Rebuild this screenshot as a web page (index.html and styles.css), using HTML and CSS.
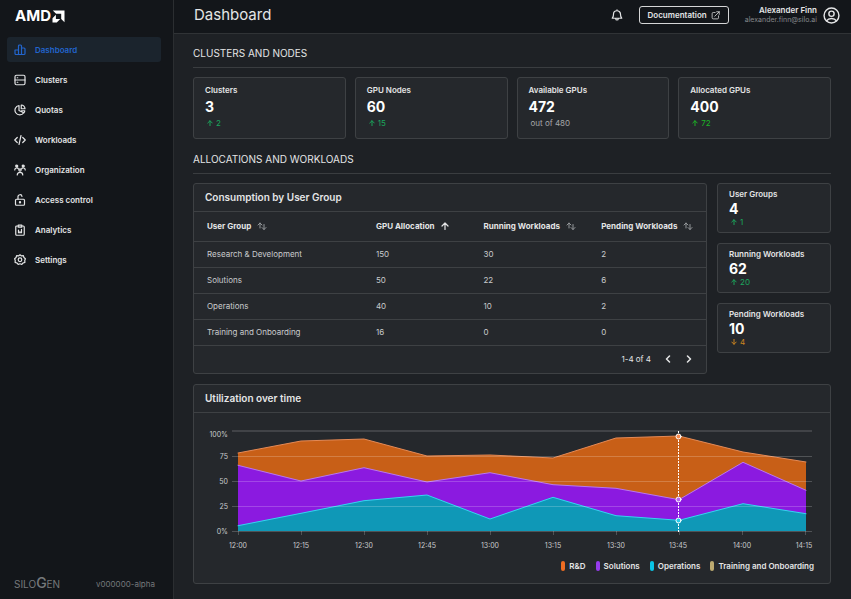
FILE: index.html
```html
<!DOCTYPE html>
<html lang="en">
<head>
<meta charset="utf-8">
<meta name="viewport" content="width=device-width, initial-scale=1">
<title>Dashboard</title>
<link rel="stylesheet" href="styles.css">
</head>
<body>
<div class="app">
  <aside class="sidebar">
    <a class="brand" href="#" aria-label="AMD home">
      <span>AMD</span>
      <svg class="brand-mark" viewBox="0 0 13 13" aria-hidden="true"><path d="M.8.5h11.7v11.7L9.2 8.9V3.8H4.100z"/><path d="M3.900 4.800v4.300h4.300l-3.400 3.400H.5V8.200z"/></svg>
    </a>
    <nav class="nav" aria-label="Main">
      <a class="nav-item active" href="#"><svg class="icon" viewBox="0 0 24 24" aria-hidden="true"><path d="M2 12h7v9H4a2 2 0 0 1-2-2zM9 4a2 2 0 0 1 2-2h2a2 2 0 0 1 2 2v17H9zM15 8h5a2 2 0 0 1 2 2v9a2 2 0 0 1-2 2h-5z"/></svg>Dashboard</a>
      <a class="nav-item" href="#"><svg class="icon" viewBox="0 0 24 24" aria-hidden="true"><rect x="2" y="2.500" width="20" height="19" rx="3"/><path d="M2 12h20M6.500 7.500h1M6.500 16.500h1"/></svg>Clusters</a>
      <a class="nav-item" href="#"><svg class="icon" viewBox="0 0 24 24" aria-hidden="true"><path d="M10 3a9.500 9.500 0 1 0 9.500 14.500L10 13zM14.500 2v7.500H22A7.500 7.500 0 0 0 14.500 2zM15 13.500h6.500c0 1.500-.7 3-1.500 4"/></svg>Quotas</a>
      <a class="nav-item" href="#"><svg class="icon" viewBox="0 0 24 24" aria-hidden="true"><path d="M6.500 7l-5 5 5 5M17.500 7l5 5-5 5M14 3l-4 18"/></svg>Workloads</a>
      <a class="nav-item" href="#"><svg class="icon" viewBox="0 0 24 24" aria-hidden="true"><circle class="solid" cx="5.500" cy="4" r="2"/><circle class="solid" cx="18.500" cy="4" r="2"/><circle cx="12" cy="12" r="2.200"/><path d="M1.500 12c0-5 6-5 7.500-2M22.500 12c0-5-6-5-7.500-2M6.500 22c0-7 11-7 11 0"/></svg>Organization</a>
      <a class="nav-item" href="#"><svg class="icon" viewBox="0 0 24 24" aria-hidden="true"><rect x="3" y="10.500" width="18" height="12" rx="2"/><path d="M8 10.500V6a4 4 0 0 1 8-1"/><circle class="solid" cx="12" cy="16.500" r="1.200"/></svg>Access control</a>
      <a class="nav-item" href="#"><svg class="icon" viewBox="0 0 24 24" aria-hidden="true"><rect x="3.500" y="4" width="17" height="18.500" rx="2"/><path d="M8.500 2h7v4.500h-7zM9 12v5.500h6v-7M12 15v2.500"/></svg>Analytics</a>
      <a class="nav-item" href="#"><svg class="icon" viewBox="0 0 24 24" aria-hidden="true"><path d="M12 1.500l3 2.300 3.800-.4 1.100 3.700 2.900 2.400-1.300 3.500.3 3.800-3.700 1.200-2.500 2.900-3.600-1.300-3.600 1.300-2.500-2.900-3.700-1.200.3-3.800-1.300-3.500 2.900-2.400 1.100-3.700 3.800.4z"/><circle cx="12" cy="11.500" r="3.600"/></svg>Settings</a>
    </nav>
    <footer class="side-footer">
      <span class="silogen">SILO<b>G</b>EN</span>
      <span class="version">v000000-alpha</span>
    </footer>
  </aside>

  <div class="page">
    <header class="topbar">
      <h1>Dashboard</h1>
      <button class="bell" type="button" aria-label="Notifications"><svg class="icon" viewBox="0 0 24 24" aria-hidden="true"><path d="M2.500 18.500h19c-2-2-2.500-3.500-2.500-8a7 7 0 0 0-14 0c0 4.500-.5 6-2.500 8zM12 3.500V1.500M9.500 19.500a2.500 2.500 0 0 0 5 0"/></svg></button>
      <button class="doc-button" type="button">Documentation<svg viewBox="0 0 24 24" aria-hidden="true"><path d="M11 4H6a3 3 0 0 0-3 3v11a3 3 0 0 0 3 3h11a3 3 0 0 0 3-3v-5M15 2h7v7M22 2L10 14"/></svg></button>
      <div class="user">
        <span class="user-name">Alexander Finn</span>
        <span class="user-mail">alexander.finn@silo.ai</span>
      </div>
      <button class="avatar" type="button" aria-label="Account"><svg viewBox="0 0 24 24" aria-hidden="true"><circle cx="12" cy="12" r="10.500"/><circle cx="12" cy="9.500" r="3.700"/><path d="M5 19.500c3-4.500 11-4.500 14 0"/></svg></button>
    </header>

    <main class="content">
      <h2 class="section-title">CLUSTERS AND NODES</h2>
      <div class="stats">
        <article class="card stat"><h3>Clusters</h3><strong>3</strong><p class="delta up"><svg viewBox="0 0 8 8" aria-hidden="true"><path d="M4 7.500V1M1 4l3-3 3 3"/></svg>2</p></article>
        <article class="card stat"><h3>GPU Nodes</h3><strong>60</strong><p class="delta up"><svg viewBox="0 0 8 8" aria-hidden="true"><path d="M4 7.500V1M1 4l3-3 3 3"/></svg>15</p></article>
        <article class="card stat"><h3>Available GPUs</h3><strong>472</strong><p class="delta">out of 480</p></article>
        <article class="card stat"><h3>Allocated GPUs</h3><strong>400</strong><p class="delta bright"><svg viewBox="0 0 8 8" aria-hidden="true"><path d="M4 7.500V1M1 4l3-3 3 3"/></svg>72</p></article>
      </div>

      <h2 class="section-title">ALLOCATIONS AND WORKLOADS</h2>
      <div class="allocations">
        <section class="card">
          <h3 class="card-title">Consumption by User Group</h3>
          <table>
            <thead>
              <tr>
                <th class="col-group" scope="col"><button type="button">User Group<svg class="sort" viewBox="0 0 10 8" aria-hidden="true"><path d="M3 6V1M1 3l2-2 2 2M7 2.500v5M5 5.500l2 2 2-2"/></svg></button></th>
                <th class="col-gpu" scope="col" aria-sort="ascending"><button type="button">GPU Allocation<svg class="sorted" viewBox="0 0 8 8" aria-hidden="true"><path d="M4 7.500V1M1 4l3-3 3 3"/></svg></button></th>
                <th class="col-load" scope="col"><button type="button">Running Workloads<svg class="sort" viewBox="0 0 10 8" aria-hidden="true"><path d="M3 6V1M1 3l2-2 2 2M7 2.500v5M5 5.500l2 2 2-2"/></svg></button></th>
                <th class="col-load" scope="col"><button type="button">Pending Workloads<svg class="sort" viewBox="0 0 10 8" aria-hidden="true"><path d="M3 6V1M1 3l2-2 2 2M7 2.500v5M5 5.500l2 2 2-2"/></svg></button></th>
              </tr>
            </thead>
            <tbody>
              <tr><td>Research &amp; Development</td><td>150</td><td>30</td><td>2</td></tr>
              <tr><td>Solutions</td><td>50</td><td>22</td><td>6</td></tr>
              <tr><td>Operations</td><td>40</td><td>10</td><td>2</td></tr>
              <tr><td>Training and Onboarding</td><td>16</td><td>0</td><td>0</td></tr>
            </tbody>
          </table>
          <div class="pager">
            <span>1-4 of 4</span>
            <button type="button" aria-label="Previous page"><svg viewBox="0 0 8 8" aria-hidden="true"><path d="M5.500 1l-3 3 3 3"/></svg></button>
            <button type="button" aria-label="Next page"><svg viewBox="0 0 8 8" aria-hidden="true"><path d="M2.500 1l3 3-3 3"/></svg></button>
          </div>
        </section>
        <div class="side-stats">
          <article class="card stat compact"><h3>User Groups</h3><strong>4</strong><p class="delta up"><svg viewBox="0 0 8 8" aria-hidden="true"><path d="M4 7.500V1M1 4l3-3 3 3"/></svg>1</p></article>
          <article class="card stat compact"><h3>Running Workloads</h3><strong>62</strong><p class="delta up"><svg viewBox="0 0 8 8" aria-hidden="true"><path d="M4 7.500V1M1 4l3-3 3 3"/></svg>20</p></article>
          <article class="card stat compact"><h3>Pending Workloads</h3><strong>10</strong><p class="delta down"><svg viewBox="0 0 8 8" aria-hidden="true"><path d="M4 .5V7M1 4l3 3 3-3"/></svg>4</p></article>
        </div>
      </div>

      <section class="card">
        <h3 class="card-title">Utilization over time</h3>
        <div class="chart-body">
          <svg class="chart" viewBox="0 0 612 128" role="img" aria-label="Utilization by group, 12:00 to 14:15">
            <path class="grid top" d="M26 6h580"/>
            <path class="area-rd" d="M32 28L95 16 158 14 221 31 284 30 347 33 410 13 473 11 537 27 600 37V106H32z"/>
            <path class="area-solutions" d="M32 40.300L95 56 158 42.700 221 57 284 47.700 347 59.700 410 63.300 473 74.700 537 37.300 600 65.300V106H32z"/>
            <path class="area-operations" d="M32 100.700L95 88.300 158 75.700 221 70 284 94 347 72.300 410 90.700 473 95.300 537 78.700 600 88.700V106H32z"/>
            <path class="line-rd" d="M32 28L95 16 158 14 221 31 284 30 347 33 410 13 473 11 537 27 600 37"/>
            <path class="line-solutions" d="M32 40.300L95 56 158 42.700 221 57 284 47.700 347 59.700 410 63.300 473 74.700 537 37.300 600 65.300"/>
            <path class="line-operations" d="M32 100.700L95 88.300 158 75.700 221 70 284 94 347 72.300 410 90.700 473 95.300 537 78.700 600 88.700"/>
            <path class="grid" d="M26 31.500h580M26 56.500h580M26 81.500h580M26 106.500h580"/>
            <path class="grid" d="M32.500 106v4M95.500 106v4M158.500 106v4M221.500 106v4M284.500 106v4M347.500 106v4M410.500 106v4M473.500 106v4M536.500 106v4M599.500 106v4"/>
            <path class="cursor" d="M472.500 6v101"/>
            <circle class="point point-rd" cx="472.500" cy="11.500" r="2.500"/>
            <circle class="point point-solutions" cx="472.500" cy="74.500" r="2.500"/>
            <circle class="point point-operations" cx="472.500" cy="95.500" r="2.500"/>
            <g class="ylabels"><text x="22" y="12">100%</text><text x="22" y="34">75</text><text x="22" y="59">50</text><text x="22" y="84">25</text><text x="22" y="109">0%</text></g>
            <g class="xlabels"><text x="32" y="123">12:00</text><text x="95" y="123">12:15</text><text x="158" y="123">12:30</text><text x="221" y="123">12:45</text><text x="284" y="123">13:00</text><text x="347" y="123">13:15</text><text x="410" y="123">13:30</text><text x="472" y="123">13:45</text><text x="536" y="123">14:00</text><text x="598" y="123">14:15</text></g>
          </svg>
          <ul class="legend">
            <li class="rd">R&amp;D</li><li class="solutions">Solutions</li><li class="operations">Operations</li><li class="training">Training and Onboarding</li>
          </ul>
        </div>
      </section>
    </main>
  </div>
</div>
</body>
</html>
```
FILE: styles.css
```css
* { box-sizing: border-box; }
body { margin: 0; background: #1e2125; color: #e4e5e6; font: 8px/12px Inter, "Open Sans", sans-serif; }
h1, h2, h3, p, ul { margin: 0; padding: 0; }
button { margin: 0; padding: 0; border: 0; background: none; color: inherit; font: inherit; cursor: pointer; }
a { color: inherit; text-decoration: none; }
svg { display: block; fill: none; stroke: currentColor; stroke-width: 2; stroke-linejoin: round; stroke-linecap: round; flex: none; }

.app { display: flex; min-height: 100vh; }
.sidebar { display: flex; flex-direction: column; width: 174px; flex: none; padding: 0 12px 9px 7px; background: #13161a; border-right: 1px solid #2b2e31; }
.brand { display: flex; align-items: center; gap: 1px; height: 37px; padding: 0 0 5px 8px; color: #fff; font-size: 15px; line-height: 20px; font-weight: 700; }
.brand-mark { width: 13px; height: 13px; fill: #fff; stroke: none; }
.nav { display: flex; flex-direction: column; gap: 5px; }
.nav-item { display: flex; align-items: center; gap: 9px; height: 25px; padding-left: 7px; border-radius: 3px; font-weight: 600; }
.nav-item.active { background: #1b242d; color: #2265cd; }
.icon { width: 12px; height: 12px; stroke-width: 2.400; }
.icon .solid { fill: currentColor; }
.side-footer { display: flex; align-items: center; justify-content: space-between; margin-top: auto; padding: 0 6px 0 7px; color: #75787b; }
.silogen { font-size: 10px; font-weight: 400; }
.silogen b { font-size: 14px; font-weight: 500; }

.page { flex: 1; min-width: 0; }
.topbar { display: flex; align-items: center; height: 34px; padding: 0 11px 3px 20px; background: #13161a; border-bottom: 1px solid #303336; }
.topbar h1 { margin-right: auto; font-size: 15px; line-height: 20px; font-weight: 400; }
.doc-button { display: flex; align-items: center; gap: 4px; height: 18px; margin: 0 16px; padding: 0 8px; border: 1px solid #d5d6d7; border-radius: 3px; font-weight: 600; }
.doc-button svg { width: 9px; height: 9px; }
.user { display: flex; flex-direction: column; text-align: right; line-height: 10px; }
.user-name { font-weight: 600; }
.user-mail { color: #85888b; font-size: 7px; }
.avatar { margin-left: 6px; }
.avatar svg { width: 17px; height: 17px; }

.content { padding: 13px 20px 15px 19px; }
.section-title { margin-bottom: 9px; padding-bottom: 7px; border-bottom: 1px solid #3a3d40; font-size: 10px; line-height: 13px; font-weight: 400; }
.card { min-width: 0; border: 1px solid #3e4144; border-radius: 3px; background: #25282c; }
.stats { display: grid; grid-template-columns: repeat(4, minmax(0, 1fr)); gap: 9px; margin-bottom: 14px; }
.stat { padding: 6px 11px 9px; }
.stat h3 { font-size: 8px; line-height: 12px; font-weight: 600; }
.stat strong { display: block; color: #fff; font-size: 14px; line-height: 21px; font-weight: 700; }
.delta { display: flex; align-items: center; gap: 3px; padding-left: 2px; color: #a5a7a9; line-height: 12px; }
.delta svg { width: 6px; height: 6px; stroke-width: 1.300; }
.up { color: #1ba65c; }
.bright { color: #1cb526; }
.down { color: #cb8420; }
.compact { padding: 4px 11px 5px; }
.compact strong { line-height: 17px; }
.compact .delta { line-height: 10px; }

.allocations { display: grid; grid-template-columns: minmax(0, 514fr) minmax(0, 114fr); gap: 10px; margin-bottom: 10px; }
.side-stats { display: flex; flex-direction: column; gap: 10px; }
.card-title { padding: 0 11px; border-bottom: 1px solid #3e4144; font-size: 10px; line-height: 27px; font-weight: 600; }
table { width: 100%; border-collapse: collapse; table-layout: fixed; }
th, td { padding: 0 0 0 13px; border-bottom: 1px solid #3e4144; text-align: left; }
th { height: 29px; font-weight: 700; }
th button { display: flex; align-items: center; gap: 6px; white-space: nowrap; }
td { height: 26px; color: #c9cbcc; }
.col-group { width: 33%; }
.col-gpu { width: 21%; }
.col-load { width: 23%; }
.sort { width: 10px; height: 8px; color: #94979a; stroke-width: 1; }
.sorted { width: 8px; height: 8px; stroke-width: 1.200; }
.pager { display: flex; align-items: center; justify-content: flex-end; gap: 13px; height: 27px; padding-right: 13px; }
.pager svg { width: 8px; height: 8px; stroke-width: 1.500; }

.chart-body { padding: 12px 12px 11px; }
.chart { width: 100%; height: auto; overflow: visible; stroke-width: 1; }
.chart text { fill: #c9cbcc; stroke: none; font-size: 7px; }
.ylabels { text-anchor: end; }
.xlabels { text-anchor: middle; }
.grid { stroke: #fff; stroke-opacity: .2; stroke-linecap: butt; }
.top { stroke-width: 2; stroke-opacity: .13; }
.area-rd { fill: #c85f17; stroke: none; }
.area-solutions { fill: #8b1ae0; stroke: none; }
.area-operations { fill: #0f98b7; stroke: none; }
.line-rd { stroke: #e58a56; }
.line-solutions { stroke: #b878ef; }
.line-operations { stroke: #35d5ef; }
.cursor { stroke: #fff; stroke-dasharray: 2 1; stroke-linecap: butt; }
.point { stroke: #fff; }
.point-rd { fill: #f58a50; }
.point-solutions { fill: #b56bf0; }
.point-operations { fill: #26cde9; }
.legend { display: flex; justify-content: flex-end; gap: 10px; padding: 7px 4px 0 0; list-style: none; font-weight: 600; }
.legend li { display: flex; align-items: center; gap: 4px; }
.legend li::before { content: ""; width: 4px; height: 10px; border-radius: 2px; background: currentColor; }
.legend .rd::before { background: #ee6c22; }
.legend .solutions::before { background: #963bed; }
.legend .operations::before { background: #0ac4e6; }
.legend .training::before { background: #bba970; }
```
